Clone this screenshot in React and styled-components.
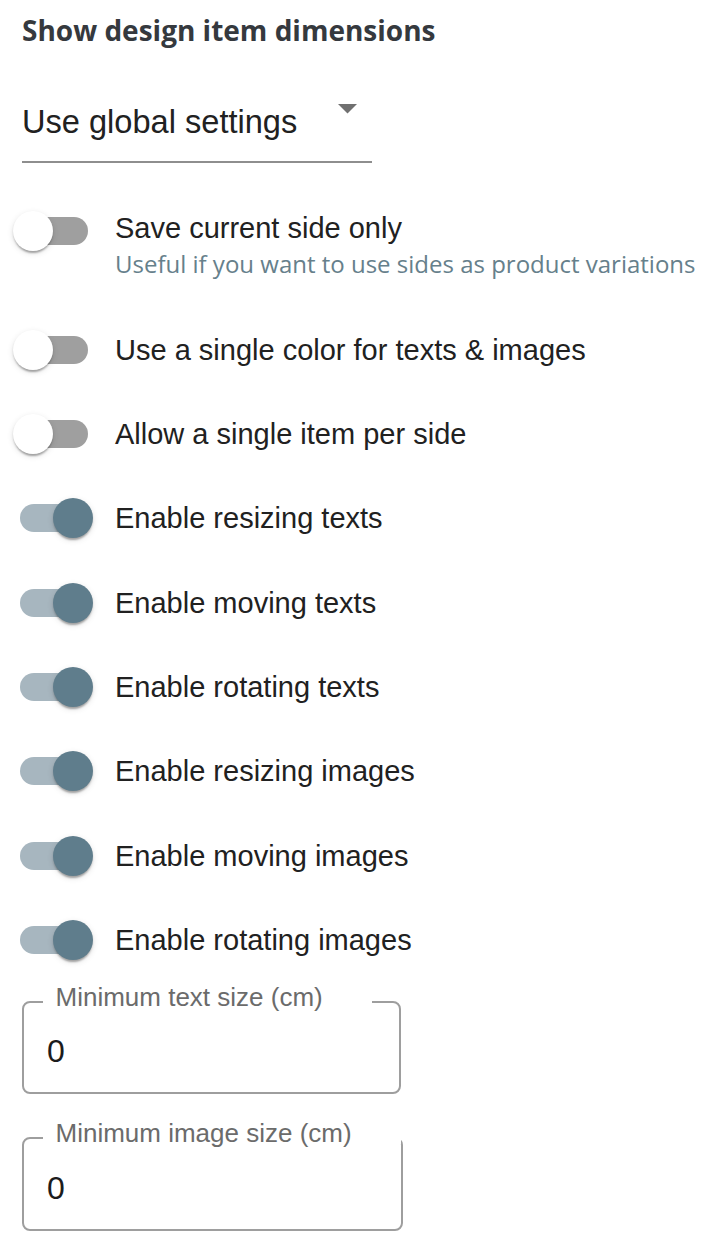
import React from "react";
import styled, { createGlobalStyle } from "styled-components";

const Global = createGlobalStyle`
  html, body { margin: 0; padding: 0; background: #fff; }
  * { box-sizing: border-box; }
`;

const Page = styled.div`
  padding: 12px 0 40px 22px;
  display: flex;
  flex-direction: column;
  align-items: flex-start;
  font-family: "Liberation Sans", Arial, sans-serif;
`;

const Title = styled.h2`
  margin: 0;
  font-family: "Open Sans", sans-serif;
  font-weight: 700;
  font-size: 28px;
  line-height: 36px;
  color: #35393e;
`;

const Select = styled.div`
  position: relative;
  width: 350px;
  margin-top: 54px;
  padding-bottom: 19px;
  border-bottom: 2px solid #8e8e8e;
  font-size: 32.6px;
  line-height: 40px;
  color: #212121;
`;

const Arrow = styled.svg`
  position: absolute;
  left: 316px;
  top: 2px;
`;

const SwitchList = styled.div`
  margin-top: 48px;
  display: flex;
  flex-direction: column;
  gap: 44.3px;
`;

const Row = styled.div`
  display: flex;
  align-items: ${(p) => (p.$top ? "flex-start" : "center")};
  gap: 22px;
  margin-bottom: ${(p) => (p.$top ? "6.5px" : "0")};
`;

const SwitchBox = styled.div`
  position: relative;
  flex: none;
  width: 80px;
  height: 40px;
  margin-left: -9px;
`;

const Track = styled.div`
  position: absolute;
  left: 7px;
  top: 6px;
  width: 68px;
  height: 28px;
  border-radius: 14px;
  background: ${(p) => (p.$on ? "#a7b6bf" : "#9f9f9f")};
`;

const Thumb = styled.div`
  position: absolute;
  top: 0;
  left: ${(p) => (p.$on ? "40px" : "0")};
  width: 40px;
  height: 40px;
  border-radius: 50%;
  background: ${(p) => (p.$on ? "#5f7d8c" : "#ffffff")};
  box-shadow: 0 4px 2px -2px rgba(0, 0, 0, 0.2), 0 2px 2px 0 rgba(0, 0, 0, 0.14),
    0 2px 6px 0 rgba(0, 0, 0, 0.12);
`;

const LabelCol = styled.div`
  display: flex;
  flex-direction: column;
  gap: 1px;
  margin-top: ${(p) => (p.$shift ? "-3px" : "0")};
`;

const Label = styled.span`
  font-size: 29px;
  line-height: 40px;
  color: #212121;
  white-space: nowrap;
`;

const Helper = styled.span`
  font-family: "Open Sans", sans-serif;
  font-size: 24px;
  line-height: 30px;
  color: #66808b;
  white-space: nowrap;
`;

const Fields = styled.div`
  margin-top: 41.5px;
  display: flex;
  flex-direction: column;
  gap: 43.5px;
`;

const FieldBox = styled.div`
  position: relative;
  width: 379px;
  height: 93px;
  padding: 30px 20px 23px 25px;
`;

const Outline = styled.fieldset`
  position: absolute;
  top: -5px;
  left: 0;
  right: 0;
  bottom: 0;
  margin: 0;
  padding: 0 0 0 19px;
  border: 2px solid #9e9e9e;
  border-radius: 8px;
  pointer-events: none;
`;

const Notch = styled.legend`
  display: block;
  height: 11px;
  padding: 0;
  font-size: 26px;
  line-height: 11px;
  visibility: hidden;
  white-space: nowrap;
  overflow: hidden;

  & > span {
    display: inline-block;
    padding: 0 50px 0 12px;
  }
`;

const FloatLabel = styled.label`
  position: absolute;
  left: 33.5px;
  top: -19.5px;
  font-size: 26px;
  line-height: 30px;
  color: #6b6b6b;
  white-space: nowrap;
`;

const Input = styled.input`
  display: block;
  width: 100%;
  height: 40px;
  border: 0;
  outline: 0;
  padding: 0;
  margin: 0;
  background: transparent;
  font-family: "Liberation Sans", Arial, sans-serif;
  font-size: 32px;
  line-height: 40px;
  color: #1c1c1c;
`;

const switches = [
  { label: "Use a single color for texts & images", on: false },
  { label: "Allow a single item per side", on: false },
  { label: "Enable resizing texts", on: true },
  { label: "Enable moving texts", on: true },
  { label: "Enable rotating texts", on: true },
  { label: "Enable resizing images", on: true },
  { label: "Enable moving images", on: true },
  { label: "Enable rotating images", on: true },
];

function Switch({ on }) {
  return (
    <SwitchBox>
      <Track $on={on} />
      <Thumb $on={on} />
    </SwitchBox>
  );
}

function Field({ label, value }) {
  return (
    <FieldBox>
      <Outline>
        <Notch>
          <span>{label}</span>
        </Notch>
      </Outline>
      <FloatLabel>{label}</FloatLabel>
      <Input readOnly value={value} />
    </FieldBox>
  );
}

export default function App() {
  return (
    <>
      <Global />
      <Page>
        <Title>Show design item dimensions</Title>
        <Select>
          Use global settings
          <Arrow width="19" height="10" viewBox="0 0 19 10">
            <path d="M0 0 L19 0 L9.5 9.5 Z" fill="#707070" />
          </Arrow>
        </Select>
        <SwitchList>
          <Row $top>
            <Switch on={false} />
            <LabelCol $shift>
              <Label>Save current side only</Label>
              <Helper>Useful if you want to use sides as product variations</Helper>
            </LabelCol>
          </Row>
          {switches.map((s) => (
            <Row key={s.label}>
              <Switch on={s.on} />
              <Label>{s.label}</Label>
            </Row>
          ))}
        </SwitchList>
        <Fields>
          <Field label="Minimum text size (cm)" value="0" />
          <Field label="Minimum image size (cm)" value="0" />
        </Fields>
      </Page>
    </>
  );
}
